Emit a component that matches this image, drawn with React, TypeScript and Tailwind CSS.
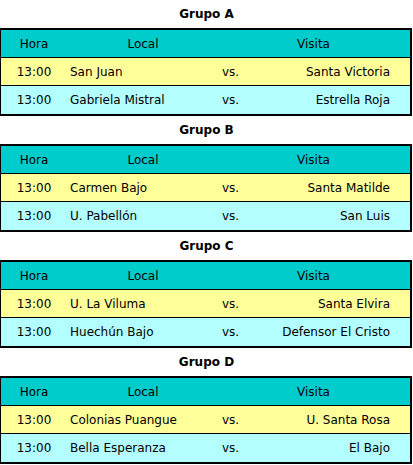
const groups = [
  {
    name: "Grupo A",
    matches: [
      ["13:00", "San Juan", "Santa Victoria"],
      ["13:00", "Gabriela Mistral", "Estrella Roja"],
    ],
  },
  {
    name: "Grupo B",
    matches: [
      ["13:00", "Carmen Bajo", "Santa Matilde"],
      ["13:00", "U. Pabellón", "San Luis"],
    ],
  },
  {
    name: "Grupo C",
    matches: [
      ["13:00", "U. La Viluma", "Santa Elvira"],
      ["13:00", "Huechún Bajo", "Defensor El Cristo"],
    ],
  },
  {
    name: "Grupo D",
    matches: [
      ["13:00", "Colonias Puangue", "U. Santa Rosa"],
      ["13:00", "Bella Esperanza", "El Bajo"],
    ],
  },
];

const rowBg = ["bg-[#ffff99]", "bg-[#b3ffff]"];

const App = () => {
  return (
    <div className="w-[413px] bg-white text-[12px] text-black font-['DejaVu_Sans',sans-serif]">
      {groups.map((g) => (
        <div key={g.name}>
          <div className="h-[28px] flex items-center justify-center font-bold">{g.name}</div>
          <div className="w-[412px] border-t-2 border-b-2 border-l border-r-2 border-black">
            <div className="grid grid-cols-[66px_152px_1fr] h-[28px] items-center bg-[#00cccc] border-b border-black">
              <span className="text-center">Hora</span>
              <span className="text-center">Local</span>
              <span className="text-center pr-[2px]">Visita</span>
            </div>
            {g.matches.map((m, i) => (
              <div
                key={m[1]}
                className={`grid grid-cols-[66px_152px_40px_1fr] h-[28px] items-center ${rowBg[i]} ${
                  i === 0 ? "border-b border-black" : ""
                }`}
              >
                <span className="text-center">{m[0]}</span>
                <span className="pl-[3px]">{m[1]}</span>
                <span className="pl-[3px]">vs.</span>
                <span className="text-right pr-[20px]">{m[2]}</span>
              </div>
            ))}
          </div>
        </div>
      ))}
    </div>
  );
};

export default App;
